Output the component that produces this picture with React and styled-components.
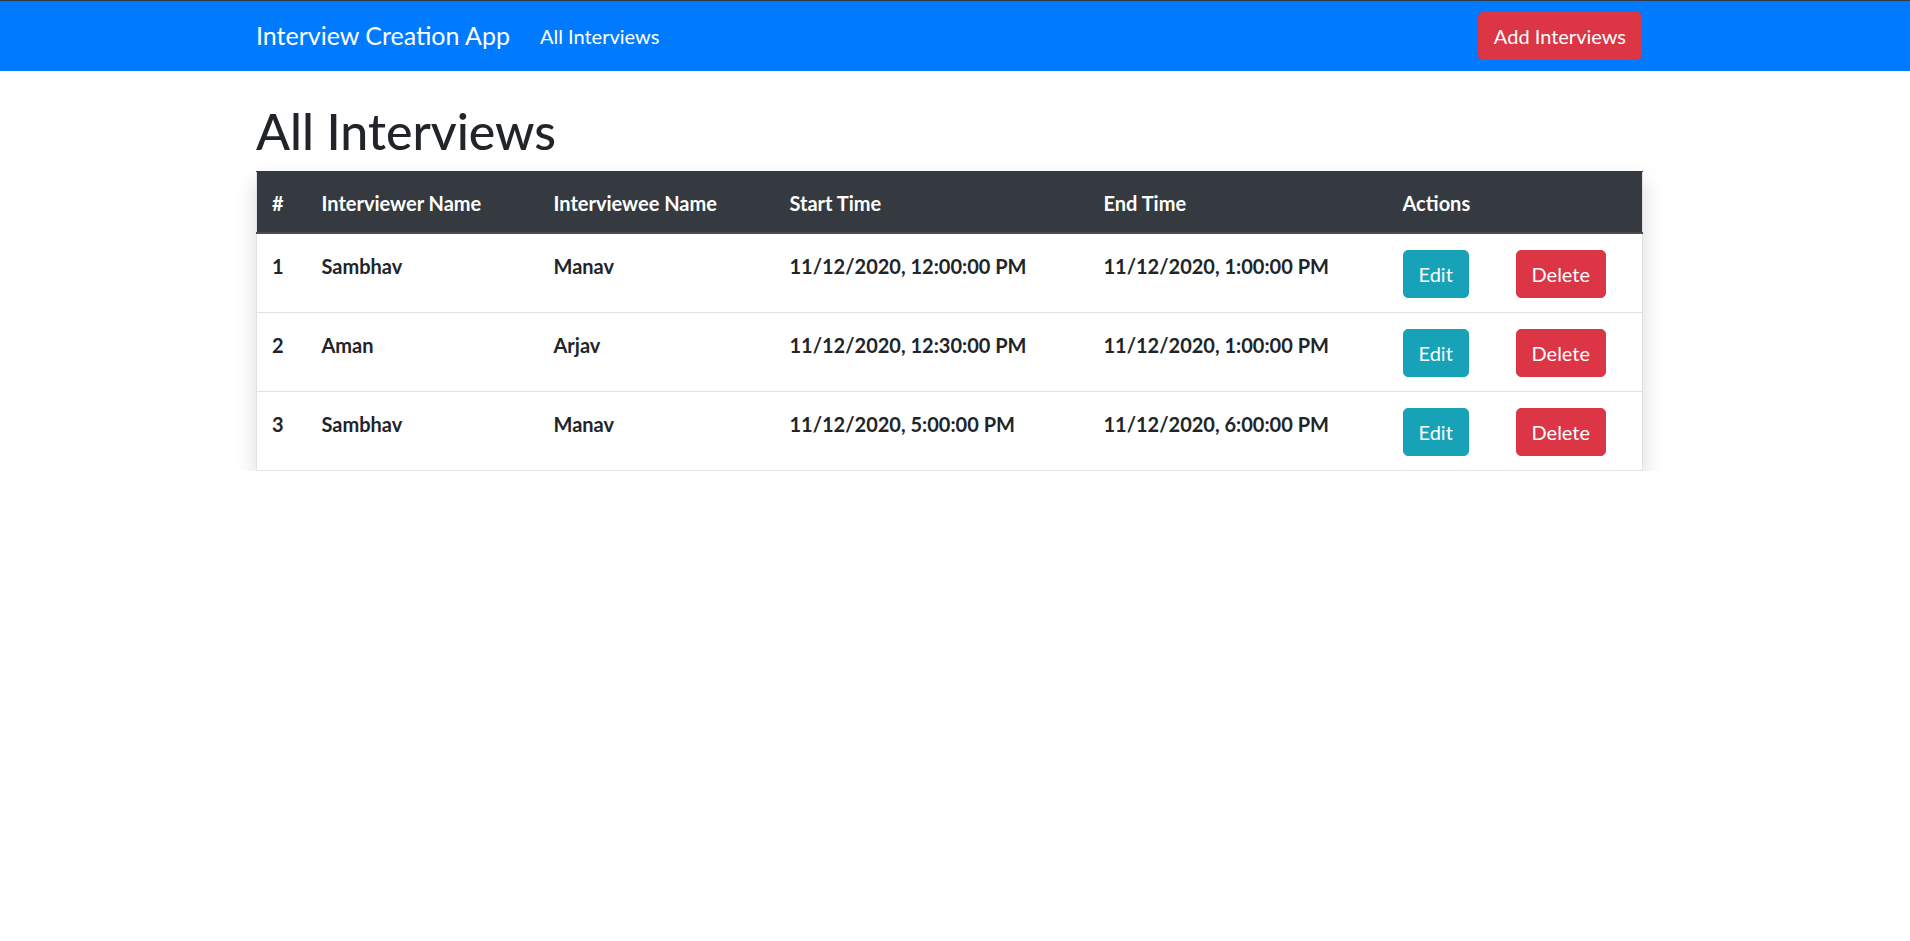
import React from 'react';
import styled, { createGlobalStyle } from 'styled-components';

const GlobalStyle = createGlobalStyle`
  * { box-sizing: border-box; }
  body {
    margin: 0;
    background: #fff;
    color: #212529;
    font-family: Lato, "Open Sans", sans-serif;
    font-size: 20px;
    line-height: 1.5;
  }
`;

const Navbar = styled.nav`
  background: #007bff;
  border-top: 1px solid #343a40;
  height: 71px;
  display: flex;
  align-items: center;
`;

const Container = styled.div`
  width: 1386px;
  margin-left: 256px;
`;

const NavInner = styled(Container)`
  display: flex;
  align-items: center;
`;

const Brand = styled.a`
  color: #fff;
  font-size: 25px;
  line-height: 37.5px;
  padding: 6px 0;
  margin-right: 20px;
  text-decoration: none;
  white-space: nowrap;
`;

const NavLink = styled.a`
  color: #fff;
  font-size: 20px;
  padding: 10px;
  text-decoration: none;
`;

const Spacer = styled.div`
  flex: 1;
`;

const Button = styled.button`
  font-family: inherit;
  font-size: 20px;
  line-height: 30px;
  padding: 8px 15px;
  height: 48px;
  border: 1px solid transparent;
  border-radius: 5px;
  color: #fff;
  cursor: pointer;
  background: ${p => (p.$variant === 'info' ? '#17a2b8' : '#dc3545')};
  border-color: ${p => (p.$variant === 'info' ? '#17a2b8' : '#dc3545')};
`;

const Main = styled(Container)`
  padding-top: 30px;
`;

const Title = styled.h1`
  margin: 0 0 10px;
  font-size: 50px;
  font-weight: 500;
  line-height: 1.2;
  color: #212529;
`;

const Table = styled.table`
  width: 100%;
  border-collapse: collapse;
  table-layout: fixed;
  border: 1px solid #dee2e6;
  box-shadow: 0 10px 20px rgba(0, 0, 0, 0.15);
  color: #212529;
`;

const Th = styled.th`
  background: #343a40;
  color: #fff;
  text-align: left;
  font-weight: 700;
  padding: 16px 15px 14px;
  line-height: 30px;
  vertical-align: bottom;
  border-top: 1px solid #343a40;
  border-bottom: 2.5px solid #454d55;
  white-space: nowrap;
`;

const Td = styled.td`
  padding: 17px 15px 13px;
  line-height: 30px;
  font-weight: 700;
  vertical-align: top;
  border-top: 1.25px solid #dee2e6;
  white-space: nowrap;
`;

const ActionTd = styled(Td)`
  padding-top: 16px;
  padding-bottom: 14px;
`;

const interviews = [
  { id: 1, interviewer: 'Sambhav', interviewee: 'Manav', start: '11/12/2020, 12:00:00 PM', end: '11/12/2020, 1:00:00 PM' },
  { id: 2, interviewer: 'Aman', interviewee: 'Arjav', start: '11/12/2020, 12:30:00 PM', end: '11/12/2020, 1:00:00 PM' },
  { id: 3, interviewer: 'Sambhav', interviewee: 'Manav', start: '11/12/2020, 5:00:00 PM', end: '11/12/2020, 6:00:00 PM' },
];

export default function App() {
  return (
    <>
      <GlobalStyle />
      <Navbar>
        <NavInner>
          <Brand href="#">Interview Creation App</Brand>
          <NavLink href="#">All Interviews</NavLink>
          <Spacer />
          <Button>Add Interviews</Button>
        </NavInner>
      </Navbar>

      <Main>
        <Title>All Interviews</Title>
        <Table>
          <colgroup>
            <col style={{ width: 50 }} />
            <col style={{ width: 232 }} />
            <col style={{ width: 236 }} />
            <col style={{ width: 314 }} />
            <col style={{ width: 299 }} />
            <col style={{ width: 113 }} />
            <col style={{ width: 142 }} />
          </colgroup>
          <thead>
            <tr>
              <Th>#</Th>
              <Th>Interviewer Name</Th>
              <Th>Interviewee Name</Th>
              <Th>Start Time</Th>
              <Th>End Time</Th>
              <Th colSpan={2}>Actions</Th>
            </tr>
          </thead>
          <tbody>
            {interviews.map(row => (
              <tr key={row.id}>
                <Td>{row.id}</Td>
                <Td>{row.interviewer}</Td>
                <Td>{row.interviewee}</Td>
                <Td>{row.start}</Td>
                <Td>{row.end}</Td>
                <ActionTd><Button $variant="info">Edit</Button></ActionTd>
                <ActionTd><Button>Delete</Button></ActionTd>
              </tr>
            ))}
          </tbody>
        </Table>
      </Main>
    </>
  );
}
